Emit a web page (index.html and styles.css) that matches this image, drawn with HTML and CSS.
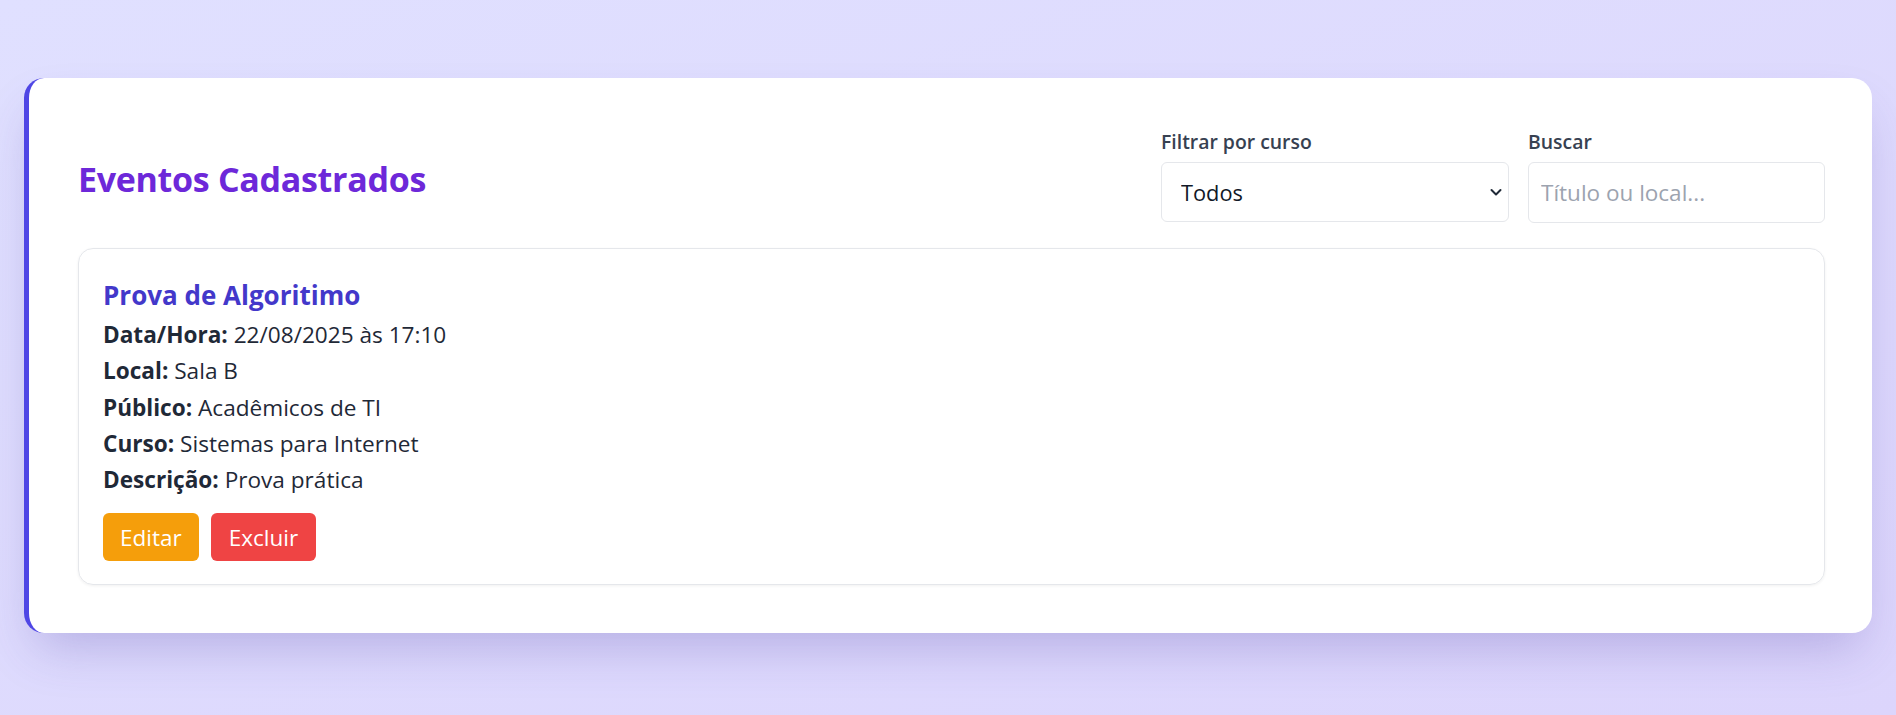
FILE: index.html
```html
<!DOCTYPE html>
<html lang="pt-BR">
<head>
<meta charset="utf-8">
<title>Eventos Cadastrados</title>
<link rel="stylesheet" href="styles.css">
</head>
<body>
<main class="page">
  <section class="panel">
    <header class="panel-header">
      <h1 class="panel-title">Eventos Cadastrados</h1>
      <div class="filters">
        <div class="field field-course">
          <label class="field-label" for="curso">Filtrar por curso</label>
          <div class="select-wrap">
            <select id="curso" class="select">
              <option>Todos</option>
            </select>
            <svg class="chevron" width="14" height="14" viewBox="0 0 14 14" aria-hidden="true"><path d="M2.5 5 L7 9.5 L11.5 5" fill="none" stroke="#1f2937" stroke-width="2" stroke-linecap="round" stroke-linejoin="round"/></svg>
          </div>
        </div>
        <div class="field field-search">
          <label class="field-label" for="buscar">Buscar</label>
          <input id="buscar" class="input" type="text" placeholder="Título ou local...">
        </div>
      </div>
    </header>

    <article class="event">
      <h2 class="event-title">Prova de Algoritimo</h2>
      <p class="event-line"><strong>Data/Hora:</strong> 22/08/2025 às 17:10</p>
      <p class="event-line"><strong>Local:</strong> Sala B</p>
      <p class="event-line"><strong>Público:</strong> Acadêmicos de TI</p>
      <p class="event-line"><strong>Curso:</strong> Sistemas para Internet</p>
      <p class="event-line"><strong>Descrição:</strong> Prova prática</p>
      <div class="actions">
        <button class="btn btn-edit">Editar</button>
        <button class="btn btn-delete">Excluir</button>
      </div>
    </article>
  </section>
</main>
</body>
</html>
```

FILE: styles.css
```css
* { box-sizing: border-box; }

html, body {
  margin: 0;
  height: 100%;
}

body {
  font-family: "Open Sans", "Noto Sans", sans-serif;
  background: linear-gradient(to bottom right, #e0e0ff, #dcd5fc);
  color: #1f2937;
}

.page {
  padding: 78px 24px 24px 24px;
}

.panel {
  background: #ffffff;
  border-left: 5px solid #4f46e5;
  border-radius: 20px;
  padding: 50px 47px 48px 49px;
  box-shadow: 0 25px 50px -12px rgba(76, 60, 160, 0.28);
}

.panel-header {
  display: flex;
  align-items: center;
  justify-content: space-between;
  margin-bottom: 25px;
}

.panel-title {
  margin: 7px 0 0 0;
  font-size: 34px;
  font-weight: 700;
  color: #6d28d9;
  letter-spacing: -0.3px;
}

.filters {
  display: flex;
  gap: 19px;
  align-items: flex-start;
}

.field-label {
  display: block;
  font-size: 19.4px;
  font-weight: 600;
  color: #374151;
  line-height: 28px;
  margin-bottom: 6px;
}

.field-course { width: 348px; }
.field-search { width: 297px; }

.select-wrap {
  position: relative;
}

.select {
  -webkit-appearance: none;
  appearance: none;
  width: 100%;
  height: 60px;
  padding: 0 40px 0 19px;
  border: 1px solid #e5e7eb;
  border-radius: 6px;
  background: #ffffff;
  font-family: inherit;
  font-size: 21.8px;
  color: #111827;
}

.chevron {
  position: absolute;
  right: 6px;
  top: 23px;
  pointer-events: none;
}

.input {
  width: 100%;
  height: 61px;
  padding: 0 12px;
  border: 1px solid #e5e7eb;
  border-radius: 6px;
  font-family: inherit;
  font-size: 22.5px;
  color: #111827;
}

.input::placeholder {
  color: #9ca3af;
}

.event {
  border: 1px solid #e5e7eb;
  border-radius: 15px;
  padding: 28px 25px 23px 24px;
  box-shadow: 0 1px 3px rgba(0, 0, 0, 0.06);
}

.event-title {
  margin: 0 0 4px 0;
  font-size: 26px;
  font-weight: 700;
  line-height: 36px;
  color: #4338ca;
}

.event-line {
  margin: 0;
  font-size: 22.6px;
  line-height: 36.3px;
  color: #1f2937;
}

.event-line strong {
  font-weight: 700;
  color: #1f2937;
}

.actions {
  display: flex;
  gap: 12px;
  margin-top: 15px;
}

.btn {
  height: 48px;
  padding: 0 17px;
  border: none;
  border-radius: 6px;
  font-family: inherit;
  font-size: 22.5px;
  color: #ffffff;
}

.btn-edit { background: #f59e0b; }
.btn-delete { background: #ef4444; padding: 0 18px; }
```
